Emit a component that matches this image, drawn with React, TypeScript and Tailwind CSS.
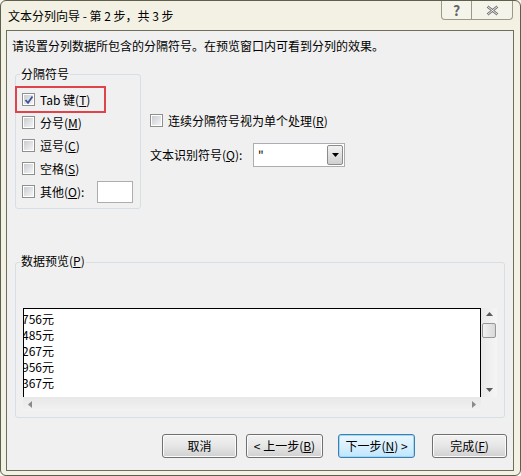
import React from 'react';

const font = { fontFamily: "'Noto Sans CJK SC', 'Liberation Sans', sans-serif" };

const Check = ({ checked = false }: { checked?: boolean }) => (
  <span className="relative flex h-[13px] w-[13px] shrink-0 items-center justify-center border border-[#8e8f8f] bg-white">
    <span className="block h-[9px] w-[9px] bg-gradient-to-br from-[#c9ccd1] to-[#f5f5f5]" />
    {checked && (
      <svg className="absolute left-[1px] top-[1px]" width="10" height="10" viewBox="0 0 10 10">
        <path d="M1.5 5 L4 7.8 L8.5 1.5" fill="none" stroke="#3b5593" strokeWidth="1.8" />
      </svg>
    )}
  </span>
);

const Row = ({ children, checked }: { children: React.ReactNode; checked?: boolean }) => (
  <div className="flex h-[23px] items-center gap-[5px]">
    <Check checked={checked} />
    <span className="leading-[16px]">{children}</span>
  </div>
);

const Button = ({ children, focus, className }: { children: React.ReactNode; focus?: boolean; className?: string }) => (
  <div
    className={`flex h-[24px] w-[75px] items-center justify-center rounded-[3px] border ${
      focus
        ? 'border-[#3c7fb1] bg-gradient-to-b from-[#eaf6fd] via-[#d9f0fc] to-[#bee6fd] shadow-[inset_0_0_0_1px_#9fd8f5]'
        : 'border-[#707070] bg-gradient-to-b from-[#f2f2f2] via-[#e6e6e6] to-[#d0d0d0] shadow-[inset_0_0_0_1px_#fbfbfb]'
    } ${className ?? ''}`}
  >
    <span className="leading-[16px]">{children}</span>
  </div>
);

export default function App() {
  return (
    <div style={font} className="h-[476px] w-[521px] overflow-hidden bg-[#f7f6ee] text-[12px] text-black">
      <div className="h-[476px] w-[521px] rounded-[6px] border border-[#5f5f4e] bg-[#f3f1e3]">
        {/* title bar */}
        <div className="flex h-[29px] items-start justify-between">
          <div className="pl-[7px] pt-[7px] leading-[16px]">文本分列向导 - 第 2 步，共 3 步</div>
          <div className="mr-[7px] flex">
            <div className="flex h-[19px] w-[31px] items-center justify-center rounded-bl-[4px] border border-t-0 border-[#9b9a87] bg-[#f5f4ea] text-[14px] font-bold leading-none text-[#666]">
              ?
            </div>
            <div className="flex h-[19px] w-[41px] items-center justify-center rounded-br-[4px] border border-l-0 border-t-0 border-[#9b9a87] bg-[#f5f4ea]">
              <svg width="13" height="11" viewBox="0 0 13 11">
                <path d="M1.5 1.5 L11.5 9.5 M11.5 1.5 L1.5 9.5" stroke="#6f6f6f" strokeWidth="2.6" fill="none" />
                <path d="M1.5 1.5 L11.5 9.5 M11.5 1.5 L1.5 9.5" stroke="#fff" strokeWidth="0.9" fill="none" />
              </svg>
            </div>
          </div>
        </div>

        {/* client area */}
        <div className="ml-[5px] h-[441px] w-[508px] border border-[#6e6e5a] bg-[#f0f0f0]">
          <div className="pl-[5px] pt-[7px] leading-[16px]">请设置分列数据所包含的分隔符号。在预览窗口内可看到分列的效果。</div>

          <div className="mt-[20px] flex pl-[8px]">
            <div className="relative h-[135px] w-[126px] rounded-[3px] border border-[#d5dfe5] pl-[6px] pt-[13px]">
              <div className="absolute -top-[9px] left-[4px] bg-[#f0f0f0] px-[1px] leading-[16px]">分隔符号</div>
              <div className="pointer-events-none absolute left-[-1px] top-[11px] h-[27px] w-[91px] border-2 border-[#e0434b]" />
              <Row checked>
                Tab 键(<u>T</u>)
              </Row>
              <Row>
                分号(<u>M</u>)
              </Row>
              <Row>
                逗号(<u>C</u>)
              </Row>
              <Row>
                空格(<u>S</u>)
              </Row>
              <div className="flex h-[23px] items-center">
                <Check />
                <span className="ml-[5px] leading-[16px]">
                  其他(<u>O</u>):
                </span>
                <div className="ml-[13px] h-[22px] w-[36px] border border-[#abadb3] bg-white" />
              </div>
            </div>

            <div className="ml-[9px] pt-[35px]">
              <div className="flex h-[23px] items-center gap-[5px]">
                <Check />
                <span className="leading-[16px]">
                  连续分隔符号视为单个处理(<u>R</u>)
                </span>
              </div>
              <div className="mt-[11px] flex items-center">
                <span className="w-[103px] leading-[16px]">
                  文本识别符号(<u>Q</u>):
                </span>
                <div className="flex h-[24px] w-[92px] items-center border border-[#abadb3] bg-white">
                  <span className="flex-1 pl-[4px] leading-[16px]">"</span>
                  <div className="mr-[1px] flex h-[20px] w-[16px] items-center justify-center rounded-[2px] border border-[#8b8b8b] bg-gradient-to-b from-[#f2f2f2] to-[#cfcfcf]">
                    <svg width="7" height="4" viewBox="0 0 7 4">
                      <path d="M0 0 H7 L3.5 4 Z" fill="#000" />
                    </svg>
                  </div>
                </div>
              </div>
            </div>
          </div>

          {/* data preview */}
          <div className="relative ml-[8px] mt-[53px] h-[156px] w-[490px] rounded-[3px] border border-[#d5dfe5] pl-[7px] pt-[45px]">
            <div className="absolute -top-[10px] left-[4px] bg-[#f0f0f0] px-[1px] leading-[16px]">
              数据预览(<u>P</u>)
            </div>
            <div className="flex w-[474px]">
              <div className="h-[89px] w-[458px] overflow-hidden border border-b-0 border-black bg-white pt-[2px]">
                {['756元', '485元', '267元', '956元', '367元'].map((v) => (
                  <div key={v} className="-ml-[2px] leading-[16px]">
                    {v}
                  </div>
                ))}
              </div>
              <div className="flex h-[89px] w-[16px] flex-col items-center bg-gradient-to-r from-[#e9e9e9] to-[#f5f5f5]">
                <svg className="mt-[4px]" width="7" height="4" viewBox="0 0 7 4">
                  <path d="M0 4 H7 L3.5 0 Z" fill="#5a5a5a" />
                </svg>
                <div className="mt-[7px] h-[15px] w-[14px] rounded-[2px] border border-[#979797] bg-gradient-to-r from-[#f2f2f2] to-[#d8d8d8]" />
                <div className="flex-1" />
                <svg className="mb-[5px]" width="7" height="4" viewBox="0 0 7 4">
                  <path d="M0 0 H7 L3.5 4 Z" fill="#5a5a5a" />
                </svg>
              </div>
            </div>
            <div className="flex w-[474px]">
              <div className="flex h-[14px] w-[458px] items-center justify-between bg-gradient-to-b from-[#e8e8e8] to-[#f2f2f2] px-[5px]">
                <svg width="4" height="7" viewBox="0 0 4 7">
                  <path d="M4 0 V7 L0 3.5 Z" fill="#8a8a8a" />
                </svg>
                <svg width="4" height="7" viewBox="0 0 4 7">
                  <path d="M0 0 V7 L4 3.5 Z" fill="#8a8a8a" />
                </svg>
              </div>
              <div className="h-[14px] w-[16px] bg-[#f0f0f0]" />
            </div>
          </div>

          {/* buttons */}
          <div className="mt-[16px] flex pl-[155px]">
            <Button>取消</Button>
            <Button className="ml-[9px] w-[77px]">
              &lt; 上一步(<u>B</u>)
            </Button>
            <Button focus className="ml-[15px] w-[77px]">
              下一步(<u>N</u>) &gt;
            </Button>
            <Button className="ml-[17px]">
              完成(<u>F</u>)
            </Button>
          </div>
        </div>
      </div>
    </div>
  );
}
